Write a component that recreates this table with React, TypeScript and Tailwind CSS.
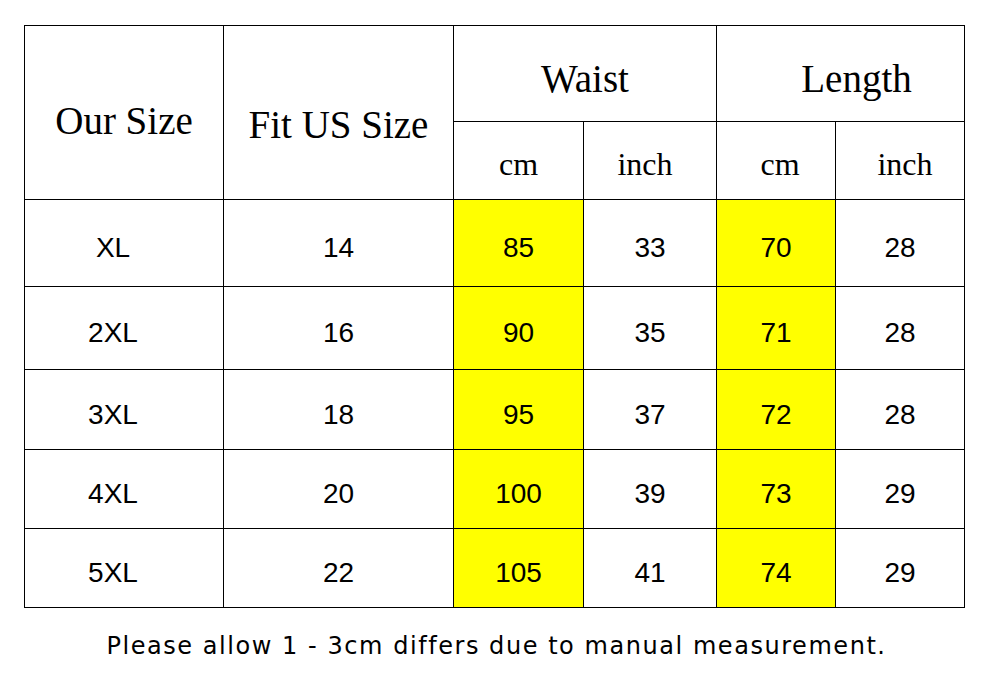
import React from "react";

const rows = [
  ["XL", "14", "85", "33", "70", "28"],
  ["2XL", "16", "90", "35", "71", "28"],
  ["3XL", "18", "95", "37", "72", "28"],
  ["4XL", "20", "100", "39", "73", "29"],
  ["5XL", "22", "105", "41", "74", "29"],
];

function Cell({ value, index }: { value: string; index: number }) {
  const yellow = index === 2 || index === 4;
  return (
    <div
      className={
        yellow
          ? "bg-[#ffff00] flex items-center justify-center pt-[10px] text-[28px] text-black font-['Liberation_Sans',Arial,sans-serif]"
          : index === 0
          ? "bg-white flex items-center justify-center pt-[10px] pr-[22px] text-[28px] text-black font-['Liberation_Sans',Arial,sans-serif]"
          : "bg-white flex items-center justify-center pt-[10px] text-[28px] text-black font-['Liberation_Sans',Arial,sans-serif]"
      }
    >
      {value}
    </div>
  );
}

export default function App() {
  return (
    <div className="w-[993px] h-[676px] bg-white">
      <div className="pt-[25px] pl-[24px]">
        <div className="inline-grid grid-cols-[198px_229px_129px_132px_118px_128px] grid-rows-[95px_77px_86px_82px_79px_78px_78px] gap-px bg-black p-px text-black font-['Liberation_Serif','Times_New_Roman',serif]">
          <div className="row-span-2 bg-white flex items-center justify-center pt-[18px] text-[39px]">
            Our Size
          </div>
          <div className="row-span-2 bg-white flex items-center justify-center pt-[26px] text-[39px]">
            Fit US Size
          </div>
          <div className="col-span-2 bg-white flex items-center justify-center pt-[12px] text-[39px]">
            Waist
          </div>
          <div className="col-span-2 bg-white flex items-center justify-center pt-[12px] pl-[32px] text-[39px]">
            Length
          </div>
          <div className="bg-white flex items-center justify-center pt-[6px] text-[32px]">
            cm
          </div>
          <div className="bg-white flex items-center justify-center pt-[6px] pr-[10px] text-[32px]">
            inch
          </div>
          <div className="bg-white flex items-center justify-center pt-[6px] pl-[8px] text-[32px]">
            cm
          </div>
          <div className="bg-white flex items-center justify-center pt-[6px] pl-[10px] text-[32px]">
            inch
          </div>
          {rows.map((r, i) =>
            r.map((v, j) => <Cell key={`${i}-${j}`} value={v} index={j} />)
          )}
        </div>
      </div>
      <div className="mt-[20px] text-center text-[24px] tracking-[1.55px] text-black font-['DejaVu_Sans',Arial,sans-serif]">
        Please allow 1 - 3cm differs due to manual measurement.
      </div>
    </div>
  );
}
